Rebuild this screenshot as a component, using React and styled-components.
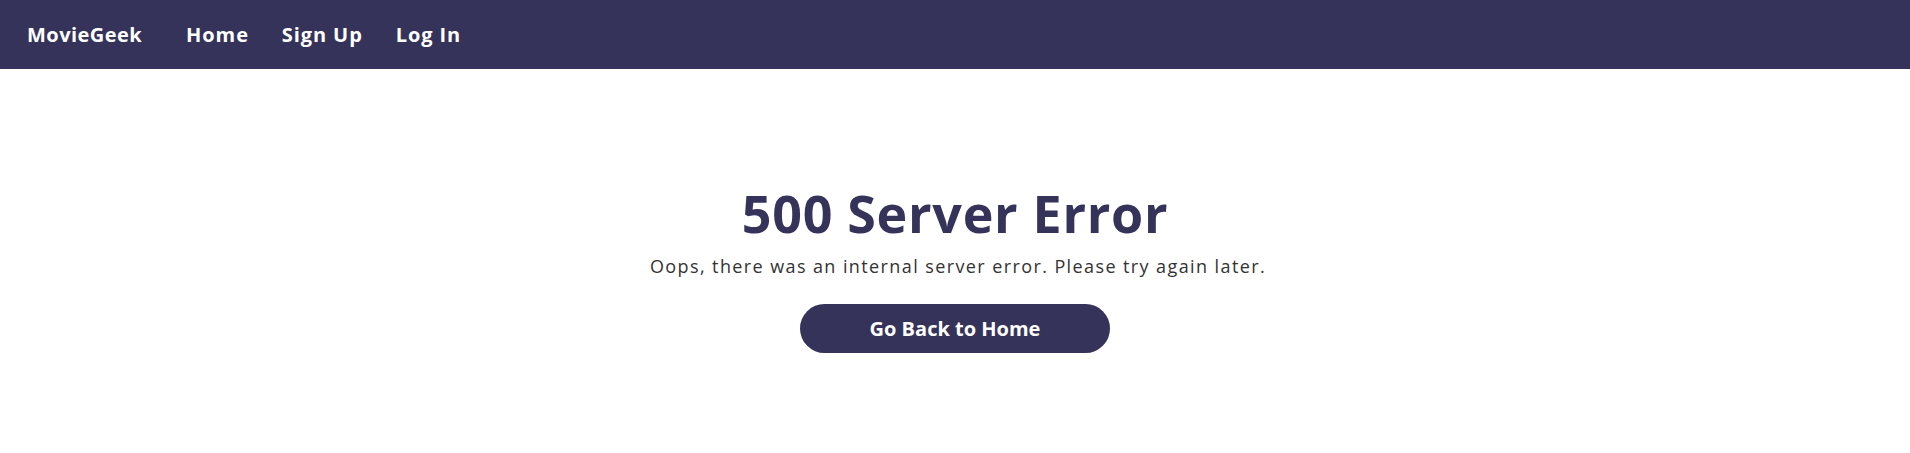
import React from "react";
import styled, { createGlobalStyle } from "styled-components";

const Global = createGlobalStyle`
  html, body { margin: 0; padding: 0; background: #ffffff; }
  body { font-family: "Open Sans", "DejaVu Sans", sans-serif; }
  * { box-sizing: border-box; }
`;

const Nav = styled.nav`
  height: 69px;
  background: #35335a;
  display: flex;
  align-items: center;
  padding: 0 27px;
`;

const Brand = styled.a`
  color: #ffffff;
  font-size: 20px;
  font-weight: 700;
  letter-spacing: 0.45px;
  text-decoration: none;
  margin-right: 44px;
`;

const NavLinks = styled.div`
  display: flex;
  gap: 33px;
`;

const NavLink = styled.a`
  color: #ffffff;
  font-size: 20px;
  font-weight: 700;
  letter-spacing: 0.9px;
  text-decoration: none;
`;

const Main = styled.main`
  display: flex;
  flex-direction: column;
  align-items: center;
  padding-top: 113px;
`;

const Title = styled.h1`
  margin: 0;
  color: #35335a;
  font-size: 52px;
  font-weight: 700;
  letter-spacing: 0.7px;
  line-height: 62px;
`;

const Message = styled.p`
  margin: 10px 0 25px 6px;
  color: #333333;
  font-size: 18px;
  letter-spacing: 1.4px;
  line-height: 25px;
`;

const HomeButton = styled.a`
  display: flex;
  align-items: center;
  justify-content: center;
  width: 310px;
  height: 49px;
  border-radius: 25px;
  background: #35335a;
  color: #ffffff;
  font-size: 20px;
  font-weight: 700;
  text-decoration: none;
`;

export default function App() {
  return (
    <>
      <Global />
      <Nav>
        <Brand href="#">MovieGeek</Brand>
        <NavLinks>
          <NavLink href="#">Home</NavLink>
          <NavLink href="#">Sign Up</NavLink>
          <NavLink href="#">Log In</NavLink>
        </NavLinks>
      </Nav>
      <Main>
        <Title>500 Server Error</Title>
        <Message>Oops, there was an internal server error. Please try again later.</Message>
        <HomeButton href="#">Go Back to Home</HomeButton>
      </Main>
    </>
  );
}
